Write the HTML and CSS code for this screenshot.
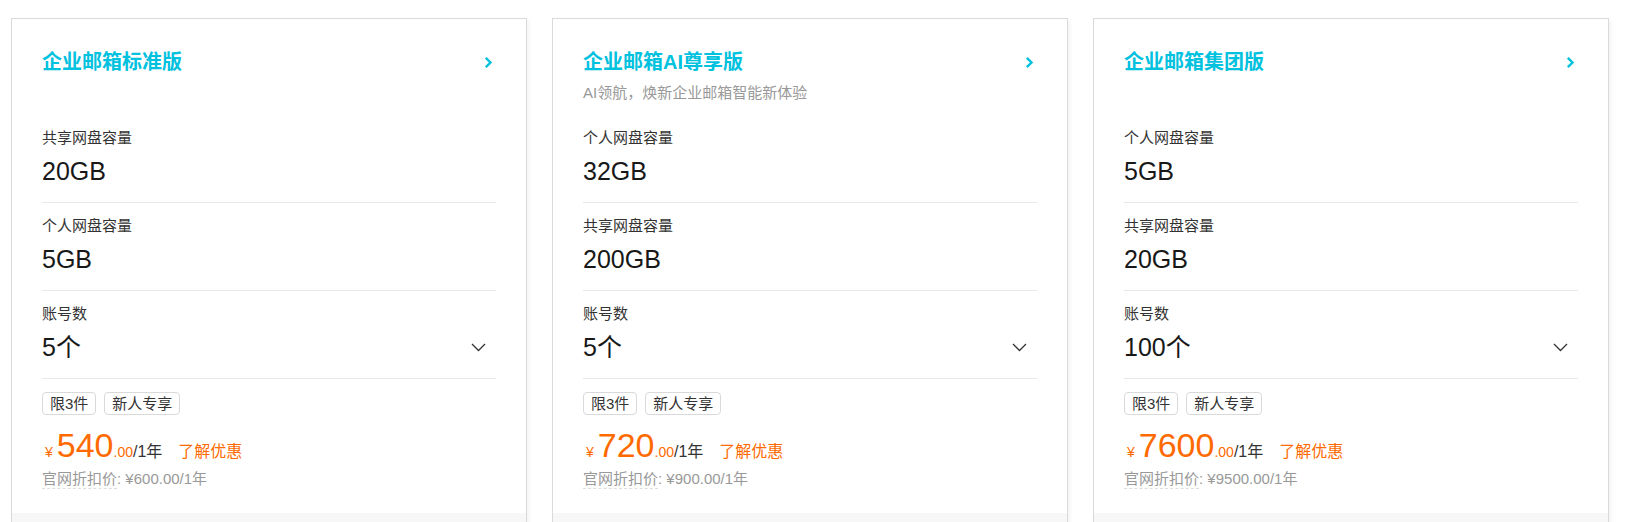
FILE: index.html
```html
<!DOCTYPE html>
<html>
<head>
  <meta charset="utf-8">
  <title>企业邮箱</title>
  <link rel="stylesheet" href="styles.css">
</head>
<body>
  <div class="plans">

    <div class="card">
      <div class="card-body">
        <div class="card-head">
          <div class="title-row">
            <span class="title">企业邮箱标准版</span>
            <svg class="arrow" width="9" height="13" viewBox="0 0 9 13"><path d="M1.8 1.8 L6.5 6.5 L1.8 11.2" fill="none" stroke="#00c1de" stroke-width="2.4"/></svg>
          </div>
          <div class="subtitle"></div>
        </div>
        <div class="spec">
          <div class="spec-label">共享网盘容量</div>
          <div class="spec-value">20GB</div>
        </div>
        <div class="spec">
          <div class="spec-label">个人网盘容量</div>
          <div class="spec-value">5GB</div>
        </div>
        <div class="spec">
          <div class="spec-label">账号数</div>
          <div class="spec-value select">5个
            <svg width="15" height="9" viewBox="0 0 15 9"><path d="M1 1 L7.5 7.5 L14 1" fill="none" stroke="#333" stroke-width="1.3"/></svg>
          </div>
        </div>
        <div class="tags">
          <span class="tag">限3件</span>
          <span class="tag">新人专享</span>
        </div>
        <div class="price">
          <span class="yen">¥</span><span class="amount">540</span><span class="cents">.00</span><span class="unit">/1年</span><span class="promo">了解优惠</span>
        </div>
        <div class="list-price"><span class="hint">官网折扣价</span>: ¥600.00/1年</div>
      </div>
      <div class="card-foot"></div>
    </div>

    <div class="card">
      <div class="card-body">
        <div class="card-head">
          <div class="title-row">
            <span class="title">企业邮箱AI尊享版</span>
            <svg class="arrow" width="9" height="13" viewBox="0 0 9 13"><path d="M1.8 1.8 L6.5 6.5 L1.8 11.2" fill="none" stroke="#00c1de" stroke-width="2.4"/></svg>
          </div>
          <div class="subtitle">AI领航，焕新企业邮箱智能新体验</div>
        </div>
        <div class="spec">
          <div class="spec-label">个人网盘容量</div>
          <div class="spec-value">32GB</div>
        </div>
        <div class="spec">
          <div class="spec-label">共享网盘容量</div>
          <div class="spec-value">200GB</div>
        </div>
        <div class="spec">
          <div class="spec-label">账号数</div>
          <div class="spec-value select">5个
            <svg width="15" height="9" viewBox="0 0 15 9"><path d="M1 1 L7.5 7.5 L14 1" fill="none" stroke="#333" stroke-width="1.3"/></svg>
          </div>
        </div>
        <div class="tags">
          <span class="tag">限3件</span>
          <span class="tag">新人专享</span>
        </div>
        <div class="price">
          <span class="yen">¥</span><span class="amount">720</span><span class="cents">.00</span><span class="unit">/1年</span><span class="promo">了解优惠</span>
        </div>
        <div class="list-price"><span class="hint">官网折扣价</span>: ¥900.00/1年</div>
      </div>
      <div class="card-foot"></div>
    </div>

    <div class="card">
      <div class="card-body">
        <div class="card-head">
          <div class="title-row">
            <span class="title">企业邮箱集团版</span>
            <svg class="arrow" width="9" height="13" viewBox="0 0 9 13"><path d="M1.8 1.8 L6.5 6.5 L1.8 11.2" fill="none" stroke="#00c1de" stroke-width="2.4"/></svg>
          </div>
          <div class="subtitle"></div>
        </div>
        <div class="spec">
          <div class="spec-label">个人网盘容量</div>
          <div class="spec-value">5GB</div>
        </div>
        <div class="spec">
          <div class="spec-label">共享网盘容量</div>
          <div class="spec-value">20GB</div>
        </div>
        <div class="spec">
          <div class="spec-label">账号数</div>
          <div class="spec-value select">100个
            <svg width="15" height="9" viewBox="0 0 15 9"><path d="M1 1 L7.5 7.5 L14 1" fill="none" stroke="#333" stroke-width="1.3"/></svg>
          </div>
        </div>
        <div class="tags">
          <span class="tag">限3件</span>
          <span class="tag">新人专享</span>
        </div>
        <div class="price">
          <span class="yen">¥</span><span class="amount">7600</span><span class="cents">.00</span><span class="unit">/1年</span><span class="promo">了解优惠</span>
        </div>
        <div class="list-price"><span class="hint">官网折扣价</span>: ¥9500.00/1年</div>
      </div>
      <div class="card-foot"></div>
    </div>

  </div>
</body>
</html>
```

FILE: styles.css
```css
html, body {
    overflow: hidden;
}

body {
    margin: 0;
    padding: 18px 16px 0 11px;
    background: #fff;
    font-family: "Liberation Sans", "Noto Sans CJK SC", sans-serif;
    color: #333;
}

.plans {
    display: grid;
    grid-template-columns: repeat(3, 1fr);
    column-gap: 25px;
}

.card {
    border: 1px solid #d9d9de;
    box-shadow: 2px 2px 4px rgba(0, 0, 0, 0.05);
    background: #fff;
}

.card-body {
    padding: 29px 30px 24px;
}

.title-row {
    display: flex;
    justify-content: space-between;
    align-items: center;
    padding-right: 3px;
}

.title {
    font-size: 20px;
    line-height: 28px;
    font-weight: bold;
    color: #00c1de;
}

.subtitle {
    margin-top: 7px;
    height: 20px;
    font-size: 15px;
    line-height: 20px;
    color: #999;
}

.card-head {
    margin-bottom: 12px;
}

.spec {
    padding: 13px 0 15px;
    border-bottom: 1px solid #e8e8e8;
}

.spec-label {
    font-size: 15px;
    line-height: 20px;
    color: #333;
}

.spec-value {
    margin-top: 7px;
    font-size: 25px;
    line-height: 32px;
    color: #181818;
}

.select {
    display: flex;
    justify-content: space-between;
    align-items: center;
    padding-right: 10px;
}

.tags {
    margin-top: 13px;
    display: flex;
    gap: 8px;
}

.tag {
    border: 1px solid #d9d9d9;
    border-radius: 4px;
    padding: 0 7px;
    font-size: 15px;
    line-height: 21px;
    color: #333;
}

.price {
    margin-top: 10px;
    display: flex;
    align-items: baseline;
    color: #ff6a00;
}

.yen {
    font-size: 14px;
    margin: 0 4px 0 3px;
}

.amount {
    font-size: 34px;
    line-height: 40px;
}

.cents {
    font-size: 14px;
}

.unit {
    font-size: 16px;
    color: #333;
}

.promo {
    margin-left: 16px;
    font-size: 16px;
}

.list-price {
    margin-top: 4px;
    font-size: 15px;
    line-height: 20px;
    color: #999;
}

.hint {
    display: inline-block;
    line-height: 18px;
    border-bottom: 1px dashed #ddd;
}

.card-foot {
    height: 60px;
    background: #f7f7f7;
}
```
